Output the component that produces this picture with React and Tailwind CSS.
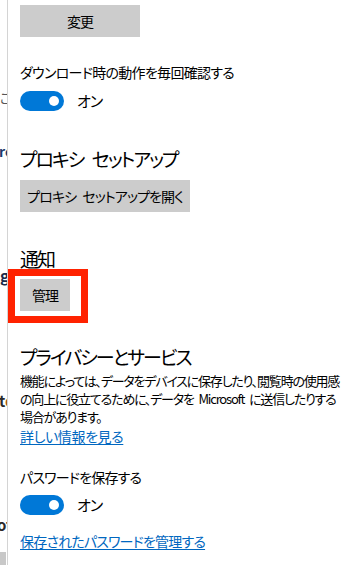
import React from 'react';

const jp = { fontFamily: '"Noto Sans CJK JP", "Noto Sans", sans-serif' };

const Toggle = ({ className = '' }) => (
  <div className={`flex items-center ${className}`}>
    <div className="flex h-[20px] w-[44px] items-center justify-end rounded-full bg-[#0078d7] pr-[5px]">
      <div className="h-[10px] w-[10px] rounded-full bg-white" />
    </div>
    <span className="ml-[13px] text-[15px] leading-[20px] tracking-[-1px] text-black">オン</span>
  </div>
);

const GrayButton = ({ children, className = '' }) => (
  <button
    className={`h-[32px] whitespace-nowrap bg-[#cccccc] text-[14px] leading-[32px] tracking-[-0.9px] [word-spacing:4px] text-black ${className}`}
  >
    {children}
  </button>
);

// strip of the page behind the settings pane
const BehindStrip = () => (
  <div className="flex w-[7px] shrink-0 flex-col overflow-hidden whitespace-nowrap">
    <div className="h-[92px]" />
    <div className="h-[16px] text-[13px] leading-[16px] text-[#555]">こ</div>
    <div className="h-[38px]" />
    <div className="ml-[-1px] h-[16px] text-[14px] font-bold leading-[16px] text-[#1c3a6b]">rc</div>
    <div className="h-[110px]" />
    <div className="h-[18px] text-[16px] font-bold leading-[18px] text-[#1c2b4a]">g</div>
    <div className="h-[112px]" />
    <div className="ml-[-1px] h-[16px] text-[15px] font-bold leading-[16px] text-[#2a2a2a]">
      t<span className="text-[#a35a1a]">o</span>
    </div>
    <div className="h-[110px]" />
    <div className="ml-[-3px] h-[16px] text-[15px] font-bold leading-[16px] text-[#2a2a2a]">ot</div>
    <div className="h-[20px]" />
    <div className="h-[13px] w-[6px] bg-[#c8c8c8]" />
  </div>
);

export default function App() {
  return (
    <div
      className="flex h-[565px] w-[349px] overflow-hidden bg-white [font-feature-settings:'palt']"
      style={jp}
    >
      <BehindStrip />
      <div className="h-full w-px shrink-0 bg-[#d4d4d4]" />
      <div className="flex min-w-0 flex-1 flex-col items-start whitespace-nowrap pl-[12px] text-black">
        <GrayButton className="mt-[5px] w-[120px]">変更</GrayButton>

        <div className="mt-[25px] text-[14px] leading-[20px] tracking-[-0.7px]">ダウンロード時の動作を毎回確認する</div>
        <Toggle className="mt-[9px]" />

        <h2 className="mt-[34px] text-[19px] leading-[28px] tracking-[-2px] [word-spacing:6px]">プロキシ セットアップ</h2>
        <GrayButton className="mt-[7px] w-[170px]">プロキシ セットアップを開く</GrayButton>

        <h2 className="mt-[33px] text-[19px] leading-[28px] tracking-[-2px]">通知</h2>
        <div className="ml-[-12px] mt-[-4px] border-[7px] border-[#ff2200] pb-[5px] pl-[5px] pr-[11px] pt-[3px]">
          <GrayButton className="w-[50px]">管理</GrayButton>
        </div>

        <h2 className="mt-[20px] text-[19px] leading-[28px] tracking-[-2px]">プライバシーとサービス</h2>
        <p className="mt-[1px] text-[13px] leading-[18px] tracking-[-1.2px] [word-spacing:3px]">
          機能によっては、データをデバイスに保存したり、閲覧時の使用感
          <br />
          の向上に役立てるために、データを Microsoft に送信したりする
          <br />
          場合があります。
        </p>
        <a
          href="#"
          className="mt-[2px] text-[14px] leading-[16px] tracking-[-0.4px] text-[#0067c0] underline underline-offset-2"
        >
          詳しい情報を見る
        </a>

        <div className="mt-[23px] text-[14px] leading-[20px] tracking-[-0.8px]">パスワードを保存する</div>
        <Toggle className="mt-[8px]" />

        <a
          href="#"
          className="mt-[16px] text-[14px] leading-[20px] tracking-[-0.8px] text-[#0067c0] underline underline-offset-2"
        >
          保存されたパスワードを管理する
        </a>
      </div>
    </div>
  );
}
